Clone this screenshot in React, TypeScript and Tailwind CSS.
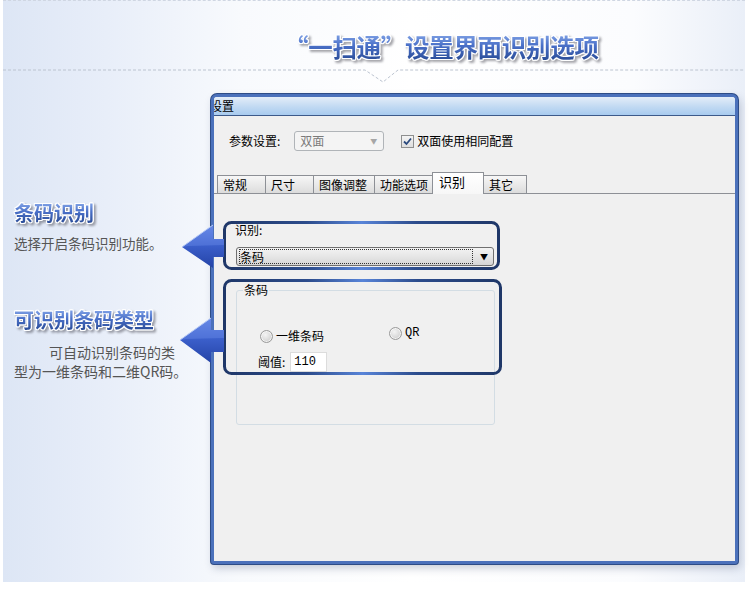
import React from "react";

const fx =
  "bg-[linear-gradient(180deg,#8fb0ee_0%,#4a70c8_45%,#24468f_100%)] bg-clip-text text-transparent [filter:drop-shadow(1px_0_0_#fff)_drop-shadow(-1px_0_0_#fff)_drop-shadow(0_1px_0_#fff)_drop-shadow(0_-1px_0_#fff)_drop-shadow(2px_2px_1px_rgba(60,60,70,0.45))]";

function Arrow({ left, top, tipY, headTop, headBottom, shaftTop, shaftBottom, backX, endX }: {
  left: number; top: number; tipY: number; headTop: number; headBottom: number;
  shaftTop: number; shaftBottom: number; backX: number; endX: number;
}) {
  const w = endX - left + 1;
  const h = headBottom - top + 2;
  const tipX = 2;
  const pts = [
    [tipX, tipY - top],
    [backX - left, headTop - top],
    [backX - left, shaftTop - top],
    [endX - left, shaftTop - top],
    [endX - left, shaftBottom - top],
    [backX - left, shaftBottom - top],
    [backX - left, headBottom - top],
  ]
    .map((p) => p.join(","))
    .join(" ");
  const upper = [
    [tipX, tipY - top],
    [backX - left, headTop - top],
    [backX - left, shaftTop - top],
    [endX - left, shaftTop - top],
    [endX - left, tipY - top - 2],
    [tipX + 6, tipY - top - 1],
  ]
    .map((p) => p.join(","))
    .join(" ");
  return (
    <svg
      className="absolute"
      style={{ left, top }}
      width={w}
      height={h}
      viewBox={`0 0 ${w} ${h}`}
    >
      <defs>
        <linearGradient id={`ag${top}`} x1="0" y1="0" x2="0" y2="1">
          <stop offset="0" stopColor="#6f90ea" />
          <stop offset="0.45" stopColor="#3c60cc" />
          <stop offset="1" stopColor="#2443a6" />
        </linearGradient>
      </defs>
      <polygon points={pts} fill={`url(#ag${top})`} />
      <polygon points={upper} fill="#5f82e2" opacity="0.55" />
      <polyline
        points={`${tipX},${tipY - top} ${backX - left},${headTop - top}`}
        stroke="#b8cbf6"
        strokeWidth="1"
        fill="none"
      />
    </svg>
  );
}

function Highlight({ left, top, w, h }: { left: number; top: number; w: number; h: number }) {
  const id = `hl${top}`;
  return (
    <svg className="absolute" style={{ left, top }} width={w + 5} height={h + 5}>
      <defs>
        <linearGradient id={id} x1="0" y1="0" x2="1" y2="0">
          <stop offset="0" stopColor="#1f3768" />
          <stop offset="0.3" stopColor="#2c4c8c" />
          <stop offset="0.5" stopColor="#5884d8" />
          <stop offset="0.7" stopColor="#2c4c8c" />
          <stop offset="1" stopColor="#1f3768" />
        </linearGradient>
      </defs>
      <rect x="2.5" y="2.5" width={w} height={h} rx="7" fill="none" stroke={`url(#${id})`} strokeWidth="3" />
    </svg>
  );
}

function Tab({ label, w, active }: { label: string; w: string; active?: boolean }) {
  return active ? (
    <div
      className={`${w} -ml-px -mb-px relative z-10 h-[22px] border-x border-t border-[#8d9096] bg-[linear-gradient(#ffffff,#f7f7f7)] pl-[6px] text-[13px] leading-[17px]`}
    >
      {label}
    </div>
  ) : (
    <div
      className={`${w} -ml-px h-[18px] border-x border-t border-[#8d9096] bg-[linear-gradient(#f7f7f7,#dcdcdc)] pl-[5px] text-[12px] leading-[17px]`}
    >
      {label}
    </div>
  );
}

function Radio() {
  return (
    <span className="inline-block h-[13px] w-[13px] rounded-full border border-[#9a9a9a] bg-[radial-gradient(circle_at_40%_35%,#f4f4f4_0%,#dadada_55%,#b9b9b9_100%)] shadow-[inset_0_0_0_1px_rgba(255,255,255,0.7)]" />
  );
}

export default function App() {
  return (
    <div className="relative h-[592px] w-[750px] overflow-hidden bg-white font-['Noto_Sans_CJK_SC',sans-serif] text-black">
      <div className="ml-[3px] h-[582px] w-[742px] border-t border-dashed border-[#cfd6e2] bg-[linear-gradient(90deg,#dde6f5_0%,#e8eef9_14%,#f8fafd_32%,#ffffff_55%,#fbfcfe_85%,#eaeff8_100%)]">
        {/* heading */}
        <div className="mt-[30px] pl-[281px]">
          <h1 className={`text-[24.5px] font-bold leading-[32px] tracking-[-0.3px] ${fx}`}>
            “一扫通”设置界面识别选项
          </h1>
        </div>
        <svg className="mt-[6px] block" width="742" height="14" viewBox="0 0 742 14">
          <path
            d="M0 1 H362 L380 13 L395 1 H742"
            fill="none"
            stroke="#bcc4d0"
            strokeWidth="1"
            strokeDasharray="3 2"
          />
        </svg>

        <div className="mt-[11px] flex items-start">
          {/* notes */}
          <div className="w-[208px] shrink-0 pl-[11px]">
            <h2 className={`mt-[107px] text-[20px] font-bold leading-[24px] ${fx}`}>条码识别</h2>
            <p className="mt-[8px] text-[13.5px] leading-[20px] text-[#555]">选择开启条码识别功能。</p>
            <h2 className={`mt-[55px] text-[20px] font-bold leading-[24px] ${fx}`}>可识别条码类型</h2>
            <p className="mt-[11px] text-[14px] leading-[19px] text-[#555]">
              <span className="block pl-[35px]">可自动识别条码的类</span>
              <span className="block">型为一维条码和二维QR码。</span>
            </p>
          </div>

          {/* settings window */}
          <div className="flex h-[470px] w-[527px] shrink-0 flex-col overflow-hidden rounded-t-[6px] rounded-b-[3px] border-[3px] border-[#4b71bb] bg-[#f0f0f0] shadow-[0_0_0_1px_#2e4c86,2px_4px_8px_rgba(30,50,90,0.25)]">
            <div className="h-[19px] border-b border-[#3d5a8a] bg-[linear-gradient(#e4edf8,#c4dbf3_50%,#a8cbef)] text-[12px] leading-[17px]">
              <span className="-ml-[4px] block">设置</span>
            </div>

            <div className="flex flex-1 flex-col">
              <div className="mt-[15px] flex h-[20px] items-center pl-[15px] text-[12px]">
                <span>参数设置:</span>
                <div className="ml-[14px] flex h-[20px] w-[90px] items-center justify-between rounded-[3px] border border-[#b0b4b8] bg-[#f4f4f4] pl-[5px] pr-[6px] text-[#7a7a7a]">
                  <span>双面</span>
                  <span className="text-[7px] text-[#a6a6a6]">▼</span>
                </div>
                <span className="ml-[17px] flex h-[13px] w-[13px] items-center justify-center border border-[#8e8f8f] bg-[linear-gradient(#f4f4f4,#dedede)]">
                  <svg width="9" height="9" viewBox="0 0 9 9">
                    <path d="M1 4.5 L3.5 7 L8 1.5" fill="none" stroke="#2b4a7e" strokeWidth="1.8" />
                  </svg>
                </span>
                <span className="ml-[3px]">双面使用相同配置</span>
              </div>

              <div className="mt-[22px] flex h-[21px] items-end border-b border-[#8d9096] pl-[4px]">
                <Tab label="常规" w="w-[49px]" />
                <Tab label="尺寸" w="w-[49px]" />
                <Tab label="图像调整" w="w-[62px]" />
                <Tab label="功能选项" w="w-[59px]" />
                <Tab label="识别" w="w-[52px]" active />
                <Tab label="其它" w="w-[44px]" />
              </div>

              <div className="flex-1 pl-[21px] pt-[28px] text-[12px]">
                <div className="leading-[16px]">识别:</div>
                <div className="ml-px mt-[9px] flex h-[19px] w-[258px] items-center rounded-[3px] border border-[#707070] bg-[linear-gradient(#f3f3f3,#e6e6e6_50%,#d6d6d6)] pl-[2px] pr-[5px]">
                  <div className="h-[15px] flex-1 border border-dotted border-[#333] leading-[13px]">条码</div>
                  <span className="ml-[7px] text-[8px] leading-none">▼</span>
                </div>

                <div className="ml-px mt-[24px] h-[135px] w-[259px] rounded-[3px] border border-[#d3dde4]">
                  <span className="-mt-[9px] ml-[6px] block w-fit bg-[#f0f0f0] px-px leading-[16px]">条码</span>
                  <div className="flex items-start pt-[30px]">
                    <div className="ml-[23px] flex h-[16px] items-center gap-[3px]">
                      <Radio />
                      <span className="leading-[16px]">一维条码</span>
                    </div>
                    <div className="-mt-[3px] ml-[65px] flex h-[16px] items-center gap-[3px]">
                      <Radio />
                      <span className="font-['Liberation_Mono',monospace] text-[12px] leading-[16px]">QR</span>
                    </div>
                  </div>
                  <div className="ml-[21px] mt-[8px] flex items-center">
                    <span>阈值:</span>
                    <div className="ml-[5px] h-[20px] w-[37px] border border-[#dcdcdc] bg-white pl-[3px] font-['Liberation_Mono',monospace] text-[12px] leading-[18px]">
                      110
                    </div>
                  </div>
                </div>
              </div>
            </div>
          </div>
        </div>
      </div>

      {/* annotations drawn over the window */}
      <Highlight left={222} top={220} w={274} h={46} />
      <Highlight left={222} top={278} w={276} h={93} />
      <Arrow left={180} top={223} tipY={247} headTop={225} headBottom={268} shaftTop={239} shaftBottom={257} backX={213} endX={224} />
      <Arrow left={178} top={316} tipY={340} headTop={318} headBottom={363} shaftTop={330} shaftBottom={352} backX={211} endX={224} />
    </div>
  );
}
